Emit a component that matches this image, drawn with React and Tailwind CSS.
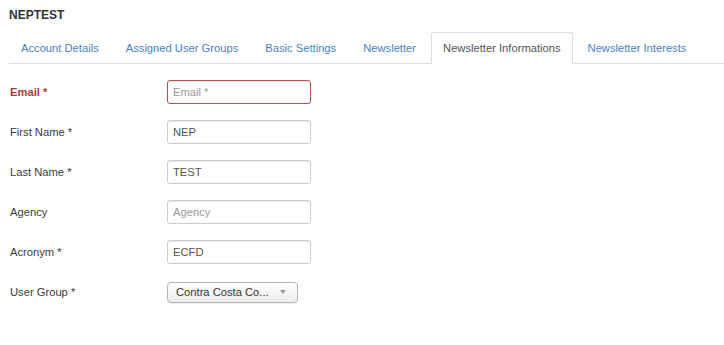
import React from "react";

const tabs = [
  "Account Details",
  "Assigned User Groups",
  "Basic Settings",
  "Newsletter",
  "Newsletter Informations",
  "Newsletter Interests",
];

function Row({ label, children, error }) {
  return (
    <div className="flex items-center h-6">
      <label
        className={
          "w-[157px] shrink-0 text-[11.2px] leading-4 " +
          (error ? "text-[#a3403d] font-bold" : "text-[#3a3a3a]")
        }
      >
        {label}
      </label>
      {children}
    </div>
  );
}

function Input({ value, placeholder, error }) {
  return (
    <input
      readOnly
      value={value || ""}
      placeholder={placeholder}
      className={
        "w-[144px] h-6 rounded-[3px] px-[5px] text-[11.2px] text-[#555555] bg-white outline-none placeholder:text-[#999999] " +
        (error
          ? "border border-[#b9504e] shadow-[inset_0_1px_1px_rgba(0,0,0,0.075)]"
          : "border border-[#cccccc] shadow-[inset_0_1px_1px_rgba(0,0,0,0.075)]")
      }
      style={{ fontFamily: '"Liberation Sans", Arial, sans-serif' }}
    />
  );
}

export default function App() {
  return (
    <div
      className="w-[724px] h-[345px] bg-white"
      style={{ fontFamily: '"Liberation Sans", Arial, sans-serif' }}
    >
      <div className="pt-[7px] pl-[9px] text-[12px] leading-4 font-bold text-[#333333]">
        NEPTEST
      </div>
      <ul className="mt-[9px] ml-[9px] flex border-b border-[#dddddd]">
        {tabs.map((t) => {
          const active = t === "Newsletter Informations";
          return (
            <li key={t} className="mb-[-1px] mr-[3px]">
              <span
                className={
                  "block px-[11px] py-[7px] leading-4 text-[11.2px] border rounded-t-[3px] " +
                  (active
                    ? "border-[#dddddd] border-b-white bg-white text-[#555555]"
                    : "border-transparent text-[#4a7fbf]")
                }
              >
                {t}
              </span>
            </li>
          );
        })}
      </ul>
      <div className="pt-4 pl-[10px] flex flex-col gap-4">
        <Row label="Email *" error>
          <Input placeholder="Email *" error />
        </Row>
        <Row label="First Name *">
          <Input value="NEP" />
        </Row>
        <Row label="Last Name *">
          <Input value="TEST" />
        </Row>
        <Row label="Agency">
          <Input placeholder="Agency" />
        </Row>
        <Row label="Acronym *">
          <Input value="ECFD" />
        </Row>
        <Row label="User Group *">
          <div className="w-[131px] h-[21px] rounded-[4px] border border-[#b5b5b5] bg-gradient-to-b from-white to-[#ececec] flex items-center pl-[8px] pr-[11px] shadow-[0_1px_1px_rgba(0,0,0,0.08)]">
            <span className="flex-1 text-[11.2px] text-[#333333] leading-4">
              Contra Costa Co...
            </span>
            <svg width="6" height="4" viewBox="0 0 6 4">
              <path d="M0 0 H6 L3 4 Z" fill="#9a9a9a" />
            </svg>
          </div>
        </Row>
      </div>
    </div>
  );
}
